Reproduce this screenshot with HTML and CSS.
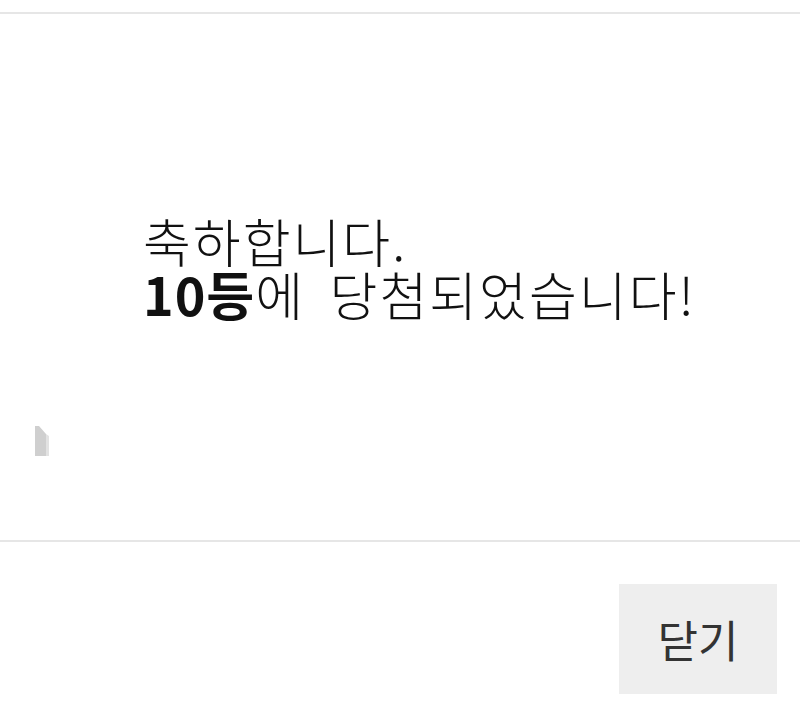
FILE: index.html
```html
<!DOCTYPE html>
<html lang="ko">
<head>
<meta charset="utf-8">
<link rel="stylesheet" href="styles.css">
</head>
<body>
<div class="modal">
  <div class="modal-body">
    <p class="message">축하합니다.<br><strong>10등</strong>에 당첨되었습니다!</p>
    <div class="broken-img">
      <svg width="16" height="32" viewBox="0 0 16 32"><polygon points="0,0 4,0 11,8 11,30 0,30" fill="#cfcfcf"/><polygon points="11,8 14,10 14,30 11,30" fill="#e2e2e2"/></svg>
    </div>
  </div>
  <div class="modal-footer">
    <button class="btn-close">닫기</button>
  </div>
</div>
</body>
</html>
```
FILE: styles.css
```css
html, body {
  margin: 0;
  padding: 0;
  background: #fff;
}
body {
  font-family: "Noto Sans CJK KR", "Noto Sans", sans-serif;
  color: #111;
}
.modal {
  padding-top: 12px;
}
.modal-body {
  border-top: 2px solid #e6e6e6;
  border-bottom: 2px solid #e6e6e6;
  height: 530px;
  box-sizing: border-box;
  padding-top: 200px;
}
.message {
  margin: 0;
  padding-left: 143px;
  font-size: 52px;
  line-height: 53px;
  letter-spacing: 2px;
  word-spacing: 8px;
  font-weight: 300;
}
.message strong {
  font-weight: 700;
  letter-spacing: 1px;
}
.broken-img {
  margin-top: 106px;
  padding-left: 35px;
  height: 32px;
}
.broken-img svg {
  display: block;
}
.modal-footer {
  display: flex;
  justify-content: flex-end;
  padding: 42px 23px 22px 0;
}
.btn-close {
  width: 158px;
  height: 110px;
  border: none;
  background: #eeeeee;
  font-family: "Noto Sans CJK KR", "Noto Sans", sans-serif;
  font-size: 44px;
  color: #333;
  padding: 0;
}
```
